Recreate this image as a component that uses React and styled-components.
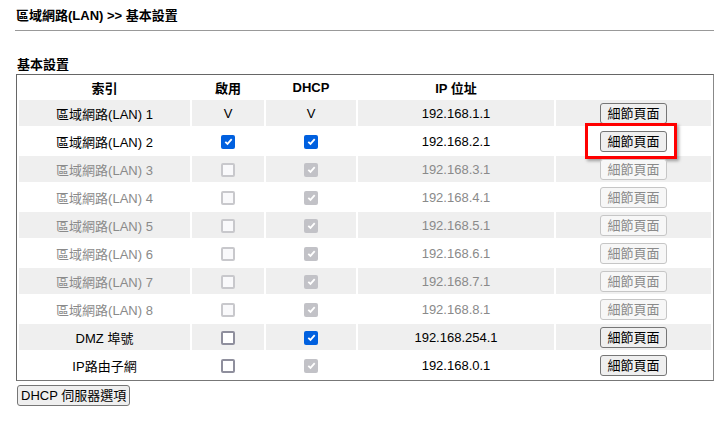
import React from "react";
import styled, { createGlobalStyle } from "styled-components";

const rows = [
  { name: "區域網路(LAN) 1", ip: "192.168.1.1", enable: "V", dhcp: "V" },
  { name: "區域網路(LAN) 2", ip: "192.168.2.1", enable: "on", dhcp: "on", marked: true },
  { name: "區域網路(LAN) 3", ip: "192.168.3.1", enable: "off-dis", dhcp: "on-dis", off: true },
  { name: "區域網路(LAN) 4", ip: "192.168.4.1", enable: "off-dis", dhcp: "on-dis", off: true },
  { name: "區域網路(LAN) 5", ip: "192.168.5.1", enable: "off-dis", dhcp: "on-dis", off: true },
  { name: "區域網路(LAN) 6", ip: "192.168.6.1", enable: "off-dis", dhcp: "on-dis", off: true },
  { name: "區域網路(LAN) 7", ip: "192.168.7.1", enable: "off-dis", dhcp: "on-dis", off: true },
  { name: "區域網路(LAN) 8", ip: "192.168.8.1", enable: "off-dis", dhcp: "on-dis", off: true },
  { name: "DMZ 埠號", ip: "192.168.254.1", enable: "off", dhcp: "on" },
  { name: "IP路由子網", ip: "192.168.0.1", enable: "off", dhcp: "on-dis" },
];

function Check({ state }) {
  if (state === "V") return <span>V</span>;
  const checked = state.startsWith("on");
  const disabled = state.endsWith("dis");
  return (
    <Box $checked={checked} $disabled={disabled}>
      {checked && (
        <svg width="9" height="9" viewBox="0 0 9 9">
          <path d="M1.3 4.8 L3.5 6.9 L7.7 2.2" fill="none" stroke="#fff" strokeWidth="1.8" />
        </svg>
      )}
    </Box>
  );
}

export default function App() {
  return (
    <>
      <GlobalStyle />
      <Page>
        <Title>區域網路(LAN) &gt;&gt; 基本設置</Title>
        <Rule />
        <Section>基本設置</Section>
        <Table>
          <colgroup>
            <col style={{ width: 171 }} />
            <col style={{ width: 72 }} />
            <col style={{ width: 90 }} />
            <col style={{ width: 196 }} />
            <col />
          </colgroup>
          <thead>
            <tr>
              <Head>索引</Head>
              <Head>啟用</Head>
              <Head>DHCP</Head>
              <Head>IP 位址</Head>
              <Head />
            </tr>
          </thead>
          <tbody>
            {rows.map((r, i) => (
              <Row key={r.name} $shaded={i % 2 === 0} $off={r.off}>
                <Cell>{r.name}</Cell>
                <Cell>
                  <Check state={r.enable} />
                </Cell>
                <Cell>
                  <Check state={r.dhcp} />
                </Cell>
                <Cell>{r.ip}</Cell>
                <Cell>
                  <ButtonWrap>
                    <Button disabled={r.off}>細節頁面</Button>
                    {r.marked && <Highlight />}
                  </ButtonWrap>
                </Cell>
              </Row>
            ))}
          </tbody>
        </Table>
        <Footer>
          <Button $compact>DHCP 伺服器選項</Button>
        </Footer>
      </Page>
    </>
  );
}

const GlobalStyle = createGlobalStyle`
  body {
    margin: 0;
    background: #fff;
    font-family: "Liberation Sans", "Noto Sans CJK TC", sans-serif;
    font-size: 13px;
    color: #000;
  }
`;

const Page = styled.div`
  width: 699px;
  padding: 8px 0 0 15px;
`;

const Title = styled.div`
  font-weight: bold;
  font-size: 13px;
  line-height: 16px;
  padding-left: 1px;
`;

const Rule = styled.div`
  height: 1px;
  background: #999;
  margin-top: 6px;
`;

const Section = styled.div`
  font-weight: bold;
  font-size: 13px;
  line-height: 16px;
  margin-top: 26px;
  padding-left: 2px;
`;

const Table = styled.table`
  width: 698px;
  margin-top: 1px;
  margin-left: 1px;
  border-collapse: separate;
  border-spacing: 2px;
  border: 1px solid #666;
  border-right-color: #888;
  border-bottom-color: #777;
  table-layout: fixed;
`;

const Head = styled.th`
  height: 21px;
  padding: 0;
  font-size: 13px;
  font-weight: bold;
  text-align: center;
`;

const Row = styled.tr`
  background: ${(p) => (p.$shaded ? "#efefef" : "#fff")};
  color: ${(p) => (p.$off ? "#8a8a8a" : "#000")};
`;

const Cell = styled.td`
  height: 26px;
  padding: 0;
  text-align: center;
  vertical-align: middle;
  font-size: 13px;
`;

const Box = styled.span`
  display: inline-flex;
  align-items: center;
  justify-content: center;
  box-sizing: border-box;
  width: 14px;
  height: 14px;
  vertical-align: middle;
  border-radius: 2px;
  background: ${(p) =>
    p.$checked ? (p.$disabled ? "#c2c2c7" : "#0060df") : p.$disabled ? "#f9f9fb" : "#fff"};
  border: ${(p) =>
    p.$checked ? "none" : p.$disabled ? "2px solid #c8c8cc" : "2px solid #8f8f9d"};
`;

const ButtonWrap = styled.span`
  position: relative;
  display: inline-block;
  vertical-align: middle;
`;

const Button = styled.button`
  font-family: "Liberation Sans", "Noto Sans CJK TC", sans-serif;
  font-size: 13px;
  height: 21px;
  padding: ${(p) => (p.$compact ? "0 3px" : "0 6px")};
  background: #efefef;
  color: #000;
  border: 1px solid #767676;
  border-radius: 3px;
  line-height: 19px;

  &:disabled {
    color: #8a8a8a;
    background: #f7f7f7;
    border-color: #c6c6c6;
  }
`;

const Highlight = styled.span`
  position: absolute;
  left: -15px;
  top: -8px;
  width: 86px;
  height: 30px;
  border: 3px solid #f00;
  box-shadow: 2px 2px 3px rgba(0, 0, 0, 0.35);
  pointer-events: none;
`;

const Footer = styled.div`
  margin-top: 4px;
  padding-left: 2px;
`;
